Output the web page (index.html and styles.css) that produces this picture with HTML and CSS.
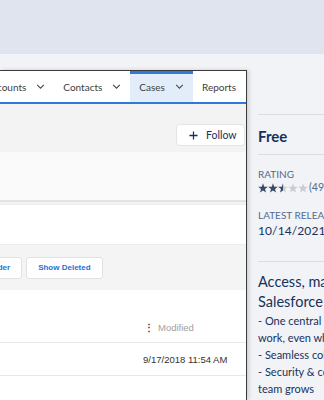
FILE: index.html
```html
<!DOCTYPE html>
<html lang="en">
<head>
    <meta charset="UTF-8">
    <meta name="viewport" content="width=device-width, initial-scale=1.0">
    <title>Listing</title>
    <link rel="stylesheet" href="styles.css">
</head>
<body>
    <div class="banner"></div>

    <div class="main">
        <div class="shot">
            <div class="nav">
                <div class="tab">Accounts <svg class="chev" viewBox="0 0 10 6"><polyline points="1,1 5,5 9,1"/></svg></div>
                <div class="tab">Contacts <svg class="chev" viewBox="0 0 10 6"><polyline points="1,1 5,5 9,1"/></svg></div>
                <div class="tab active">Cases <svg class="chev" viewBox="0 0 10 6"><polyline points="1,1 5,5 9,1"/></svg></div>
                <div class="tab">Reports</div>
            </div>
            <div class="record-head">
                <div class="follow"><svg class="plus" viewBox="0 0 10 10"><path d="M5 0.5v9M0.5 5h9"/></svg>Follow</div>
            </div>
            <div class="record-sub"></div>
            <div class="record-blank"></div>
            <div class="btn-bar">
                <div class="btn">Change Owner Folder</div>
                <div class="btn">Show Deleted</div>
            </div>
            <div class="table">
                <div class="th-row"><span class="kebab">&#8942;</span>Modified</div>
                <div class="td-row">9/17/2018 11:54 AM</div>
            </div>
        </div>

        <div class="side">
            <div class="price">Free</div>
            <div class="meta">
                <div class="label">RATING</div>
                <div class="rating">
                    <svg class="stars" viewBox="0 0 50 10">
                        <defs>
                            <linearGradient id="half">
                                <stop offset="50%" stop-color="#3a4a63"/>
                                <stop offset="50%" stop-color="#c9ccd3"/>
                            </linearGradient>
                            <polygon id="st" points="5,0.3 6.2,3.7 9.8,3.8 7,6 8,9.6 5,7.5 2,9.6 3,6 0.2,3.8 3.8,3.7"/>
                        </defs>
                        <use href="#st" x="0" fill="#3a4a63"/>
                        <use href="#st" x="10" fill="#3a4a63"/>
                        <use href="#st" x="20" fill="url(#half)"/>
                        <use href="#st" x="30" fill="#c9ccd3"/>
                        <use href="#st" x="40" fill="#c9ccd3"/>
                    </svg>
                    <span>(49)</span>
                </div>
                <div class="label latest">LATEST RELEASE</div>
                <div class="date">10/14/2021</div>
            </div>
            <div class="desc">
                <div class="desc-title">Access, manage, and share<br>Salesforce files</div>
                <p>- One central place for all your<br>work, even when offline</p>
                <p>- Seamless collaboration</p>
                <p>- Security &amp; control as your<br>team grows</p>
            </div>
        </div>
    </div>
</body>
</html>
```

FILE: styles.css
```css
body { margin: 0; background: #f1f3f7; font-family: Lato, "Open Sans", sans-serif; overflow: hidden; }
.banner { height: 54px; background: #dfe4ee; }
.main { display: flex; padding-top: 16px; height: 330px; }

.shot { width: 246px; flex: none; border-top: 1px solid #3a3a3a; border-right: 1px solid #3a3a3a; background: #fff; overflow: hidden; box-shadow: 2px 0 4px rgba(0,0,0,0.15); }

.nav { height: 31px; display: flex; justify-content: flex-end; border-bottom: 2px solid #2f7ad8; background: #fff; padding-right: 1px; }
.tab { display: flex; align-items: center; padding: 0 9px; font-size: 10px; color: #3e3e3c; white-space: nowrap; }
.tab.active { background: #e3edfa; box-shadow: inset 0 3px 0 #2f7ad8; }
.chev { width: 9px; height: 5px; margin-left: 10px; fill: none; stroke: #4a4a4a; stroke-width: 1.3; }

.record-head { height: 48px; background: #f3f3f3; display: flex; justify-content: flex-end; align-items: flex-start; padding-top: 20px; box-sizing: border-box; }
.follow { height: 22px; width: 69px; margin-right: 1px; box-sizing: border-box; background: #fff; border: 1px solid #e4e4e4; border-radius: 4px; display: flex; align-items: center; padding-left: 12px; font-size: 10.5px; color: #16325c; }
.plus { width: 9px; height: 9px; margin-right: 8px; stroke: #16325c; stroke-width: 1.4; }

.record-sub { height: 48px; background: #fafafa; border-bottom: 2px solid #e3e3e3; box-shadow: 0 2px 2px rgba(0,0,0,0.06); }
.record-blank { height: 39px; background: #fff; margin-top: 2px; border-top: 1px solid #ececec; border-bottom: 1px solid #ececec; }

.btn-bar { height: 45px; background: #f4f4f4; display: flex; justify-content: flex-start; align-items: center; gap: 4px; overflow: hidden; }
.btn { height: 22px; box-sizing: border-box; background: #fff; border: 1px solid #e1e1e1; border-radius: 3px; display: flex; align-items: center; padding: 0 11px; font-family: "Liberation Sans", Arial, sans-serif; font-weight: bold; font-size: 8px; color: #1b72d6; white-space: nowrap; }
.btn:first-child { margin-left: -85px; }

.table { font-family: "Liberation Sans", Arial, sans-serif; font-size: 9.5px; }
.th-row { height: 53px; border-bottom: 1px solid #e8e8e8; display: flex; align-items: flex-end; padding: 0 0 9px 144px; box-sizing: border-box; color: #a0a0a0; }
.kebab { color: #444; font-weight: bold; margin-right: 4px; }
.td-row { height: 32px; border-bottom: 1px solid #e8e8e8; display: flex; align-items: center; padding-left: 143px; color: #333; }

.side { margin-left: 11px; padding-top: 44px; color: #16325c; white-space: nowrap; }
.price { border-top: 1px solid #d8dde6; border-bottom: 1px solid #d8dde6; height: 41px; display: flex; align-items: center; font-size: 15px; font-weight: bold; padding-top: 2px; box-sizing: border-box; }
.meta { padding: 13px 0 22px; border-bottom: 1px solid #d8dde6; }
.label { font-size: 10px; color: #54698d; line-height: 13px; }
.latest { margin-top: 15px; }
.rating { display: flex; align-items: center; font-size: 10.5px; color: #54698d; line-height: 13px; }
.stars { width: 50px; height: 10px; margin-right: 1px; }
.date { font-size: 12px; line-height: 17px; letter-spacing: 0.1px; }
.desc { padding-top: 10px; }
.desc-title { font-size: 14.5px; line-height: 20px; }
.desc p { margin: 0; font-size: 11px; line-height: 17px; }
```
